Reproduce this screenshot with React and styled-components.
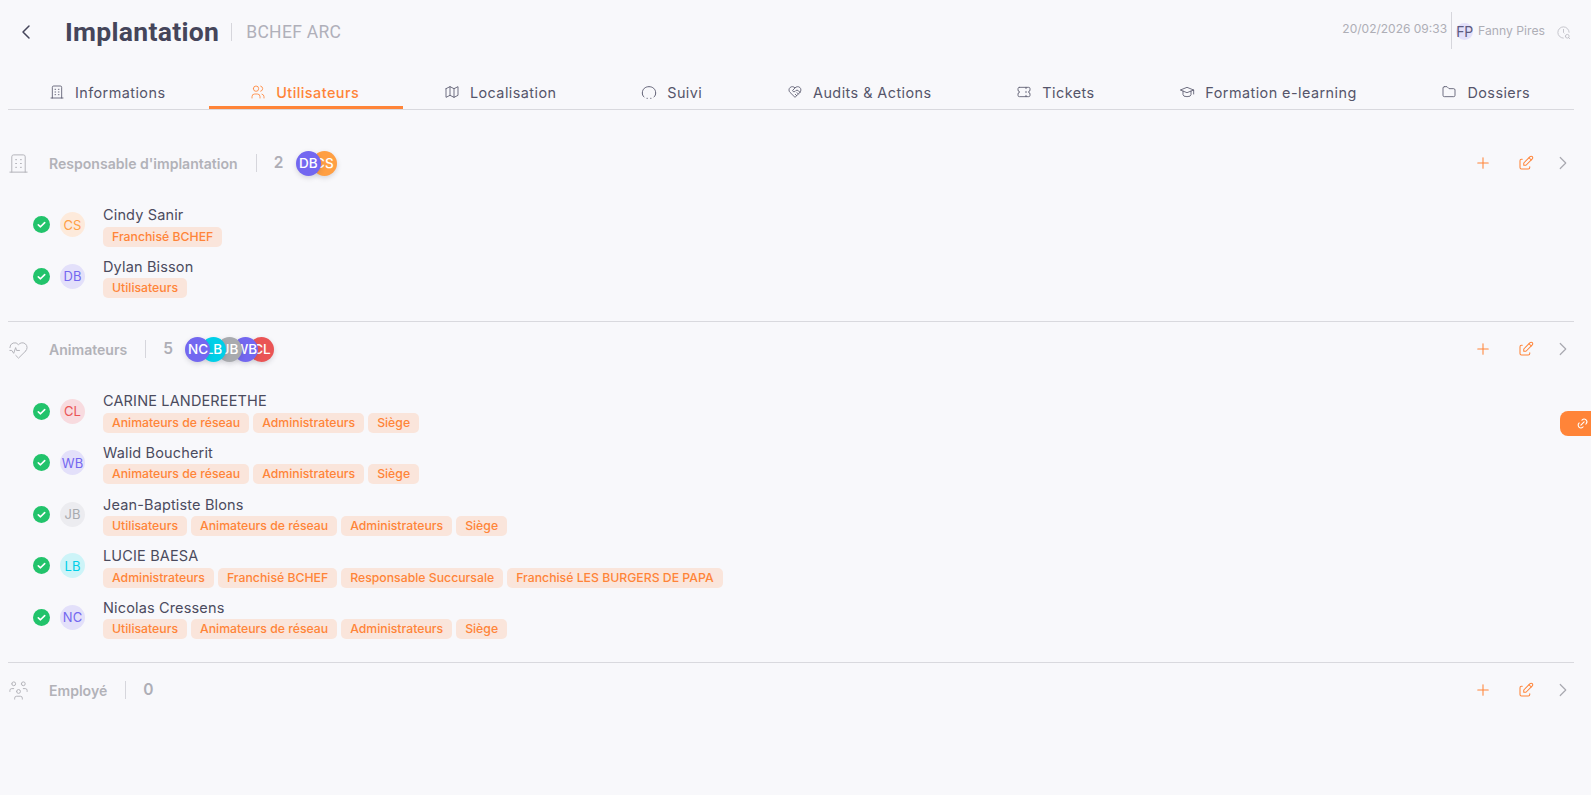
import React from "react";
import styled, { createGlobalStyle } from "styled-components";
import {
  TbBuilding, TbUsers, TbMap, TbHeartHandshake, TbTicket, TbSchool, TbFolder,
  TbHeartbeat, TbUsersGroup, TbPlus, TbEdit, TbChevronRight, TbChevronLeft, TbLink, TbClockSearch,
} from "react-icons/tb";

const orange = "#ff8438";
const Global = createGlobalStyle`
  html, body { margin: 0; padding: 0; background: #f8f8fb; }
  body { font-family: Inter, "Liberation Sans", sans-serif; color: #45455a; height: 795px; overflow: hidden; }
`;
const Page = styled.div`position: relative; height: 795px; padding: 0 17px 0 8px; box-sizing: border-box;`;
const Header = styled.header`display: flex; align-items: center; height: 64px; padding-right: 3px;`;
const Back = styled.div`display: flex; width: 48px; padding-left: 6px; box-sizing: border-box; color: #45455a;`;
const Title = styled.h1`margin: 0 0 0 9px; font: 700 26.5px/32px Roboto, sans-serif; color: #45455a; letter-spacing: 0.3px;`;
const Sub = styled.span`margin-left: 12px; padding-left: 14px; border-left: 1px solid #d6d6dc; font: 400 17.5px/18px Roboto, sans-serif; color: #b0b0ba; letter-spacing: 0.3px;`;
const Right = styled.div`margin-left: auto; display: flex; align-items: center; height: 34px; margin-top: -1px;`;
const Stamp = styled.span`font-size: 12px; color: #aeaeb6; padding-right: 4px; line-height: 34px; align-self: stretch; border-right: 1px solid #d6d6dc; margin-top: -3px;`;
const MiniAvatar = styled.span`width: 17px; height: 17px; border-radius: 50%; background: #e3e0fa; margin-left: 4px; display: flex; align-items: center; justify-content: center; font-size: 14px; color: #5d5a80; letter-spacing: -0.3px; white-space: nowrap;`;
const UserName = styled.span`font-size: 12.2px; color: #aeaeb6; margin-left: 5px; margin-top: -2px;`;
const HistoryBox = styled.span`display: flex; margin-left: 11px; margin-top: 2px; color: #b4b4bc;`;

const Tabs = styled.nav`display: flex; height: 45px; border-bottom: 1px solid #d9d9de; box-sizing: content-box;`;
const Tab = styled.div`
  flex: 1 1 auto; display: flex; align-items: center; justify-content: center; gap: 10px;
  height: 45px; padding: 14px 3px 0 0; box-sizing: border-box;
  font-size: 14.4px; letter-spacing: 0.45px; white-space: nowrap;
  color: ${p => (p.$active ? orange : "#55556a")};
  font-weight: ${p => (p.$active ? 500 : 400)};
  border-bottom: 3px solid ${p => (p.$active ? orange : "transparent")};
`;
const Section = styled.section`
  padding: ${p => p.$pt}px 0 ${p => p.$pb}px; border-bottom: ${p => (p.$last ? "none" : "1px solid #d9d9de")};
`;
const Head = styled.div`display: flex; align-items: center; height: 28px; color: #b2b2b8;`;
const HeadIcon = styled.span`display: flex; width: 41px; margin-left: -1px; margin-right: 1px; box-sizing: border-box; color: #b2b2b8;`;
const HeadLabel = styled.span`font-size: 14.05px; font-weight: 600; color: #b2b2b8;`;
const Count = styled.span`margin-left: 18px; padding-left: 17px; border-left: 1px solid #d6d6dc; font-size: 15.5px; font-weight: 600; color: #aeaeb6; line-height: 18px;`;
const Stack = styled.div`display: flex; margin-left: 12.5px; flex-direction: row;`;
const Bubble = styled.span`
  width: 25px; height: 25px; border-radius: 50%; background: ${p => p.$c}; color: #fff;
  display: flex; align-items: center; justify-content: center; font-size: 13.5px; font-weight: 500;
  margin-left: ${p => (p.$first ? 0 : "-9px")}; z-index: ${p => p.$z}; box-shadow: 0 2px 5px rgba(60,60,80,.18); overflow: hidden; white-space: nowrap;
`;
const Actions = styled.div`margin-left: auto; display: flex; align-items: center; color: ${orange};`;
const ActionBtn = styled.span`display: flex; margin-left: ${p => p.$ml || 0}px; color: ${p => p.$muted ? "#a9a9b0" : orange};`;
const Rows = styled.div`padding: 23.5px 0 0 25px; display: flex; flex-direction: column; gap: 3px;`;
const Row = styled.div`display: flex; align-items: center; height: 48.6px;`;
const Avatar = styled.span`
  width: 25px; height: 25px; border-radius: 50%; margin-left: 10px; margin-right: 18px;
  display: flex; align-items: center; justify-content: center; font-size: 13px;
  background: ${p => p.$bg}; color: ${p => p.$c}; flex: none;
`;
const Info = styled.div`display: flex; flex-direction: column; gap: 1.5px; margin-top: 2px;`;
const Name = styled.div`font-size: 14.5px; line-height: 20px; color: #4b4b5e; letter-spacing: 0.15px;`;
const Chips = styled.div`display: flex; gap: 4px;`;
const Chip = styled.span`
  padding: 0 9px; height: 20px; line-height: 20px; border-radius: 5px; font-size: 12.25px; font-weight: 500;
  background: #fae5db; color: ${orange}; white-space: nowrap;
`;
const FloatTab = styled.div`
  position: absolute; right: 0; top: 411px; width: 31px; height: 25px; background: ${orange};
  border-radius: 8px 0 0 8px; color: #fff; display: flex; align-items: center; padding-left: 16px; box-sizing: border-box;
`;

const Check = () => (
  <svg width="17" height="17" viewBox="0 0 17 17">
    <circle cx="8.5" cy="8.5" r="8.5" fill="#22c36b" />
    <path d="M5.3 8.8l2.2 2 4.2-4.2" fill="none" stroke="#fff" strokeWidth="1.6" strokeLinecap="round" strokeLinejoin="round" />
  </svg>
);
const SuiviIcon = () => (
  <svg width="16" height="16" viewBox="0 0 24 24" fill="none" stroke="currentColor" strokeWidth="1.4" strokeLinecap="round" strokeLinejoin="round">
    <path d="M4.500 19.500C2.500 17.800 2 15.500 2 13.500C2 7.500 6.500 4 12 4s10 3.500 10 9.500c0 2-.5 4.300-2.500 6" />
    <path d="M9 21.500h.5M15 21.500h-.5" />
  </svg>
);

const tabs = [
  [TbBuilding, "Informations"], [TbUsers, "Utilisateurs", true], [TbMap, "Localisation"], [SuiviIcon, "Suivi"],
  [TbHeartHandshake, "Audits & Actions"], [TbTicket, "Tickets"], [TbSchool, "Formation e-learning"], [TbFolder, "Dossiers"],
];
const people = {
  CS: ["#fdeadb", "#ff9f45"], DB: ["#e3e0fa", "#7367f0"], CL: ["#f8dbdf", "#ea5455"], WB: ["#e3e0fa", "#7367f0"],
  JB: ["#ececf0", "#a8aaae"], LB: ["#cdf4f8", "#00cfe8"], NC: ["#e3e0fa", "#7367f0"],
};
const sections = [
  {
    icon: <TbBuilding size={23} strokeWidth={1} />, label: "Responsable d'implantation", count: 2, pt: 39, pb: 20.6,
    bubbles: [["DB", "#7367f0"], ["CS", "#ff9f43"]],
    rows: [
      ["CS", "Cindy Sanir", ["Franchisé BCHEF"]],
      ["DB", "Dylan Bisson", ["Utilisateurs"]],
    ],
  },
  {
    icon: <TbHeartbeat size={23} strokeWidth={1} />, label: "Animateurs", count: 5, pt: 13, pb: 20.6,
    bubbles: [["NC", "#7367f0"], ["LB", "#00cfe8"], ["JB", "#a8aaae"], ["WB", "#7367f0"], ["CL", "#ea5455"]],
    rows: [
      ["CL", "CARINE LANDEREETHE", ["Animateurs de réseau", "Administrateurs", "Siège"]],
      ["WB", "Walid Boucherit", ["Animateurs de réseau", "Administrateurs", "Siège"]],
      ["JB", "Jean-Baptiste Blons", ["Utilisateurs", "Animateurs de réseau", "Administrateurs", "Siège"]],
      ["LB", "LUCIE BAESA", ["Administrateurs", "Franchisé BCHEF", "Responsable Succursale", "Franchisé LES BURGERS DE PAPA"]],
      ["NC", "Nicolas Cressens", ["Utilisateurs", "Animateurs de réseau", "Administrateurs", "Siège"]],
    ],
  },
  { icon: <TbUsersGroup size={23} strokeWidth={1} />, label: "Employé", count: 0, bubbles: [], rows: [], last: true, pt: 13, pb: 0 },
];

export default function App() {
  return (
    <Page>
      <Global />
      <Header>
        <Back><TbChevronLeft size={24} strokeWidth={1.5} /></Back>
        <Title>Implantation</Title>
        <Sub>BCHEF ARC</Sub>
        <Right>
          <Stamp>20/02/2026 09:33</Stamp>
          <MiniAvatar>FP</MiniAvatar>
          <UserName>Fanny Pires</UserName>
          <HistoryBox><TbClockSearch size={15} strokeWidth={1.2} /></HistoryBox>
        </Right>
      </Header>
      <Tabs>
        {tabs.map(([I, t, a]) => (
          <Tab key={t} $active={a}><I size={16} strokeWidth={1.25} />{t}</Tab>
        ))}
      </Tabs>
      {sections.map(s => (
        <Section key={s.label} $last={s.last} $pt={s.pt} $pb={s.pb}>
          <Head>
            <HeadIcon>{s.icon}</HeadIcon>
            <HeadLabel>{s.label}</HeadLabel>
            <Count>{s.count}</Count>
            {s.bubbles.length > 0 && (
              <Stack>
                {s.bubbles.map(([n, c], i) => (
                  <Bubble key={n} $c={c} $first={i === 0} $z={10 - i}>{n}</Bubble>
                ))}
              </Stack>
            )}
            <Actions>
              <ActionBtn><TbPlus size={18} strokeWidth={1.4} /></ActionBtn>
              <ActionBtn $ml={25}><TbEdit size={18} strokeWidth={1.4} /></ActionBtn>
              <ActionBtn $ml={17} $muted><TbChevronRight size={22} strokeWidth={1.3} /></ActionBtn>
            </Actions>
          </Head>
          {s.rows.length > 0 && (
            <Rows>
              {s.rows.map(([k, n, tags]) => (
                <Row key={n}>
                  <Check />
                  <Avatar $bg={people[k][0]} $c={people[k][1]}>{k}</Avatar>
                  <Info>
                    <Name>{n}</Name>
                    <Chips>{tags.map(t => <Chip key={t}>{t}</Chip>)}</Chips>
                  </Info>
                </Row>
              ))}
            </Rows>
          )}
        </Section>
      ))}
      <FloatTab><TbLink size={13} strokeWidth={2} /></FloatTab>
    </Page>
  );
}
